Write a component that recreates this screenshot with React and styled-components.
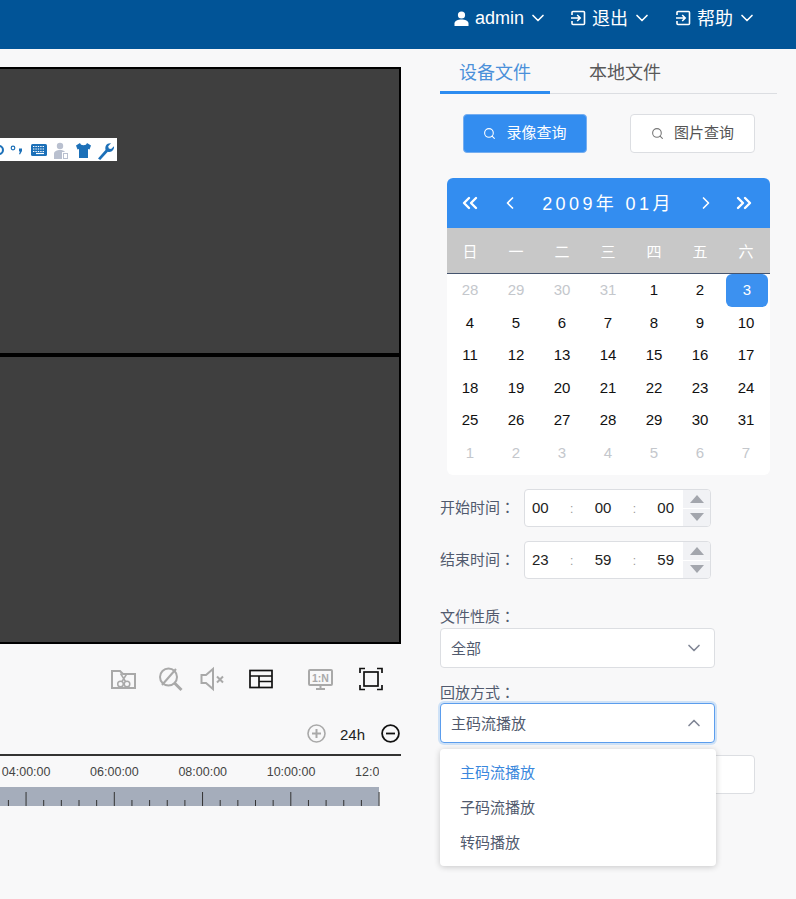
import React from 'react'
import styled, { createGlobalStyle } from 'styled-components'
import { ChevronDown, ChevronUp, ChevronLeft, ChevronRight, ChevronsLeft, ChevronsRight, Search } from 'lucide-react'

const GlobalStyle = createGlobalStyle`
  html, body {
    margin: 0;
    height: 100%;
    overflow: hidden;
    background: #f8f8f9;
    font-family: "Liberation Sans", "Noto Sans CJK SC", sans-serif;
  }
`

const Header = styled.header`
  height: 49px;
  background: #015497;
  display: flex;
  justify-content: flex-end;
  padding-right: 39px;
  color: #fff;
  font-size: 18px;
`
const HeaderItem = styled.div`
  display: flex;
  align-items: center;
  height: 36px;
  margin-left: ${(p) => p.$gap || 0}px;
  gap: 6px;
  svg:last-child {
    margin-left: -2px;
  }
`
const HeaderText = styled.span`
  margin-bottom: 2px;
`
const Main = styled.main`
  display: flex;
  gap: 39px;
`
const LeftColumn = styled.section`
  width: 401px;
  flex: none;
  padding-top: 18px;
`
const VideoGrid = styled.div`
  position: relative;
  height: 573px;
  border: 2px solid #000;
  border-left: none;
  background: #000;
  display: grid;
  grid-template-rows: 284px 285px;
  row-gap: 4px;
`
const VideoCell = styled.div`
  background: #3f3f3f;
`
const OverlayBar = styled.div`
  position: absolute;
  left: 0;
  top: 69px;
  width: 117px;
  height: 23px;
  background: #fff;
  overflow: hidden;
`
const ControlRow = styled.div`
  display: flex;
  align-items: center;
  height: 30px;
  margin-top: 20px;
  padding-left: 111px;
`
const ControlIcon = styled.svg`
  flex: none;
  width: ${(p) => p.$w || 25}px;
  height: 26px;
  margin-right: ${(p) => p.$gap || 0}px;
  fill: none;
  stroke: ${(p) => (p.$dark ? '#111' : '#a9a9a9')};
  stroke-width: ${(p) => (p.$dark ? 1.7 : 2)};
`
const IconLabel = styled.text`
  fill: #a9a9a9;
  stroke: none;
  font-size: 10.5px;
  font-weight: 700;
  font-family: "Liberation Sans", sans-serif;
`
const ZoomRow = styled.div`
  display: flex;
  align-items: center;
  justify-content: flex-end;
  height: 24px;
  margin-top: 27px;
  padding-right: 1px;
  font-size: 15px;
  color: #222;
`
const ZoomLabel = styled.span`
  margin: 3px 16px 0 14px;
`
const Timeline = styled.div`
  margin-top: 9px;
  border-top: 2px solid #333;
  width: 401px;
`
const TimeLabels = styled.div`
  width: 379px;
  height: 31px;
  overflow: hidden;
  display: flex;
  align-items: center;
  font-size: 12.5px;
  color: #444;
`
const TimeLabel = styled.span`
  flex: none;
  width: 88.3px;
  text-align: center;
  &:first-child {
    margin-left: -18px;
  }
`
const Ruler = styled.svg`
  display: block;
  width: 380px;
  height: 19px;
`

const RightColumn = styled.aside`
  width: 337px;
  flex: none;
  position: relative;
`
const Tabs = styled.div`
  display: flex;
  height: 44px;
  border-bottom: 1px solid #dcdee2;
`
const Tab = styled.div`
  width: ${(p) => p.$w}px;
  height: 45px;
  box-sizing: border-box;
  text-align: center;
  line-height: 48px;
  font-size: 18px;
  color: ${(p) => (p.$active ? '#4a90d9' : '#595959')};
  border-bottom: ${(p) => (p.$active ? '3px solid #2d8cf0' : 'none')};
`
const QueryRow = styled.div`
  display: flex;
  gap: 43px;
  margin: 20px 0 25px 23px;
`
const QueryButton = styled.button`
  display: flex;
  align-items: center;
  justify-content: center;
  gap: 10px;
  width: ${(p) => p.$w}px;
  height: 39px;
  padding: 0;
  font: inherit;
  font-size: 15px;
  border-radius: 4px;
  border: 1px solid ${(p) => (p.$primary ? '#76aef0' : '#dcdee2')};
  background: ${(p) => (p.$primary ? '#338df0' : '#fff')};
  color: ${(p) => (p.$primary ? '#fff' : '#555')};
`
const ButtonText = styled.span`
  margin-bottom: 4px;
`
const Calendar = styled.div`
  width: 323px;
  margin-left: 7px;
  background: #fff;
  border-radius: 6px;
  overflow: hidden;
`
const CalendarHead = styled.div`
  height: 50px;
  background: #338df0;
  color: #fff;
  display: flex;
  align-items: center;
  padding: 0 14px 0 11px;
`
const CalendarTitle = styled.div`
  flex: 1;
  text-align: center;
  font-size: 18px;
  letter-spacing: 3.4px;
  white-space: pre;
  padding-bottom: 2px;
`
const NavGroup = styled.div`
  display: flex;
  align-items: center;
  gap: ${(p) => p.$gap}px;
`
const WeekRow = styled.div`
  display: grid;
  grid-template-columns: repeat(7, 46px);
  height: 46px;
  align-items: center;
  background: #c8c8c8;
  border-bottom: 1px solid #45546e;
  box-sizing: border-box;
`
const WeekCell = styled.div`
  text-align: center;
  font-size: 15px;
  color: #fff;
`
const DayGrid = styled.div`
  display: grid;
  grid-template-columns: repeat(7, 46px);
  grid-auto-rows: 32.5px;
  padding-bottom: 6px;
`
const Day = styled.div`
  display: flex;
  align-items: center;
  justify-content: center;
  padding-bottom: 1px;
  font-size: 15px;
  margin-left: ${(p) => (p.$selected ? '3px' : 0)};
  margin-right: ${(p) => (p.$selected ? '1px' : 0)};
  border-radius: ${(p) => (p.$selected ? '6px' : 0)};
  background: ${(p) => (p.$selected ? '#3c91f0' : 'transparent')};
  color: ${(p) => (p.$selected ? '#fff' : p.$muted ? '#c4c7cc' : '#111')};
`
const TimeField = styled.div`
  display: flex;
  align-items: center;
  margin-top: 14px;
`
const FieldLabel = styled.label`
  width: 84px;
  font-size: 15px;
  color: #515a6e;
  white-space: nowrap;
  padding-bottom: 4px;
`
const FullColon = styled.span`
  font-family: "Noto Sans CJK TC", sans-serif;
`
const TimeBox = styled.div`
  width: 187px;
  height: 38px;
  box-sizing: border-box;
  display: flex;
  background: #fff;
  border: 1px solid #dcdee2;
  border-radius: 4px;
  overflow: hidden;
`
const TimeValues = styled.div`
  flex: 1;
  display: flex;
  align-items: center;
  justify-content: space-between;
  padding: 0 9px 2px 7px;
  font-size: 15px;
  color: #222;
`
const Colon = styled.span`
  color: #999;
  font-size: 12px;
  margin-top: 3px;
`
const Spinner = styled.div`
  width: 27px;
  flex: none;
  display: grid;
  grid-template-rows: 1fr 1fr;
  row-gap: 1px;
`
const SpinButton = styled.div`
  display: flex;
  align-items: center;
  justify-content: center;
  background: #f1f2f5;
  &::before {
    content: '';
    border-left: 7px solid transparent;
    border-right: 7px solid transparent;
    border-top: ${(p) => (p.$down ? '8px solid #a3a6ad' : 'none')};
    border-bottom: ${(p) => (p.$down ? 'none' : '8px solid #a3a6ad')};
  }
`
const SelectLabel = styled.div`
  font-size: 15px;
  line-height: 20px;
  color: #515a6e;
  margin-top: ${(p) => p.$top}px;
  margin-bottom: ${(p) => p.$bottom}px;
`
const Select = styled.div`
  width: 275px;
  height: 40px;
  box-sizing: border-box;
  display: flex;
  align-items: center;
  justify-content: space-between;
  padding: 0 10px;
  background: #fff;
  border-radius: 4px;
  font-size: 15px;
  color: #515a6e;
  border: 1px solid ${(p) => (p.$open ? '#5b9ded' : '#dcdee2')};
  box-shadow: ${(p) => (p.$open ? '0 0 0 2px rgba(45, 140, 240, 0.2)' : 'none')};
`
const SelectText = styled.span`
  margin-bottom: 2px;
`
const BackInput = styled.div`
  width: 315px;
  height: 39px;
  box-sizing: border-box;
  margin-top: 12px;
  background: #fff;
  border: 1px solid #dcdee2;
  border-radius: 4px;
`
const Dropdown = styled.ul`
  position: absolute;
  left: 0;
  top: 700px;
  width: 276px;
  height: 117px;
  box-sizing: border-box;
  margin: 0;
  padding: 6px 0;
  list-style: none;
  background: #fff;
  border-radius: 4px;
  box-shadow: 0 1px 6px rgba(0, 0, 0, 0.2);
`
const Option = styled.li`
  height: 35px;
  line-height: 35px;
  padding-left: 20px;
  font-size: 15px;
  color: ${(p) => (p.$active ? '#3a87dd' : '#515a6e')};
`

function EnterIcon() {
  return (
    <svg width="16" height="16" viewBox="0 0 16 16" fill="none" stroke="#fff" strokeWidth="1.6">
      <path d="M2 5V2.500A1 1 0 0 1 3 1.500h10.500a1 1 0 0 1 1 1v11a1 1 0 0 1-1 1H3a1 1 0 0 1-1-1V11" />
      <path d="M1 8h9M7.200 5l3 3-3 3" />
    </svg>
  )
}

function UserIcon() {
  return (
    <svg width="15" height="15" viewBox="0 0 15 15" fill="#fff">
      <circle cx="7.500" cy="4" r="3.600" />
      <path d="M0.500 15v-2.500C0.500 10 4 8.600 7.500 8.600s7 1.400 7 3.900V15z" />
    </svg>
  )
}

function OverlayIcons() {
  return (
    <svg width="117" height="23" viewBox="0 0 117 23" fill="#1c70b8">
      <circle cx="-1" cy="12" r="4" fill="none" stroke="#1c70b8" strokeWidth="2" />
      <circle cx="13" cy="10" r="1.800" fill="none" stroke="#1c70b8" strokeWidth="1.200" />
      <path d="M19 10.500h3v2.500l-2 3.500-1-.6 1-2.400h-1z" />
      <rect x="31" y="6" width="16" height="12" rx="1.500" />
      <path d="M33 8.500h12M33 11h12M33 13.500h12" stroke="#fff" strokeWidth="1.100" strokeDasharray="1.400 1" />
      <path d="M36 15.500h8" stroke="#fff" strokeWidth="1.200" />
      <circle cx="60" cy="8" r="3.200" fill="#b9c0cf" />
      <path d="M54 21v-5c0-3 3-4 6-4 2 0 4 .5 5 2h-3v7z" fill="#b9c0cf" />
      <rect x="63.500" y="15.500" width="4" height="5" fill="#fff" stroke="#b9c0cf" strokeWidth="1" />
      <path d="M80 5l-4 2.500 1.500 4 1.500-.6V20h9v-9.100l1.500.6 1.500-4-4-2.500c-.6 1.600-1.300 2.200-3.500 2.200S80.600 6.600 80 5z" />
      <path d="M98 20.500l7.500-8.500c-.6-2.800.2-5 2.200-6.200 1-.6 2.200-.8 3.300-.6l-2.800 3 .6 2.300 2.300.6 2.900-2.800c.2 1.400-.1 2.600-.9 3.700-1.300 1.700-3.200 2.300-5.300 1.700L100.200 22z" />
    </svg>
  )
}

function ControlIcons() {
  return (
    <ControlRow>
      <ControlIcon viewBox="0 0 25 26" $gap={22}>
        <path d="M1 5h8l3 3h12v14H1z" />
        <circle cx="9.500" cy="18" r="2.800" strokeWidth="1.500" />
        <circle cx="16" cy="18" r="2.800" strokeWidth="1.500" />
        <path d="M11 15.500l5-8M14.500 15.500l-5-8" strokeWidth="1.500" />
      </ControlIcon>
      <ControlIcon viewBox="0 0 25 26" $gap={17}>
        <circle cx="10.500" cy="11" r="8.500" />
        <path d="M4 19L18 3" />
        <path d="M16.500 17l7 7" strokeWidth="3" />
      </ControlIcon>
      <ControlIcon viewBox="0 0 24 26" $w={24} $gap={25}>
        <path d="M1.500 9h4.500l7-6v20l-7-6H1.500z" />
        <path d="M17 10.500l6 6M23 10.500l-6 6" />
      </ControlIcon>
      <ControlIcon viewBox="0 0 24 26" $w={24} $gap={35} $dark>
        <rect x="1" y="4.500" width="22" height="17" />
        <path d="M1 10h22M10 10v11.500M10 15.500h13" />
      </ControlIcon>
      <ControlIcon viewBox="0 0 25 26" $gap={26}>
        <rect x="1" y="4" width="23" height="15" rx="1" />
        <path d="M8 23h9M12.500 19v4" />
        <IconLabel x="12.500" y="15.500" textAnchor="middle">1:N</IconLabel>
      </ControlIcon>
      <ControlIcon viewBox="0 0 24 26" $w={24} $dark>
        <rect x="5" y="6" width="14" height="14" />
        <path d="M1 7V2.500h5M18 2.500h5V7M1 19v4.500h5M18 23.500h5V19" />
      </ControlIcon>
    </ControlRow>
  )
}

function Ruler24() {
  const ticks = []
  for (let i = 0; i <= 21; i++) {
    const x = 8.4 + i * 17.65
    const major = i % 5 === 1
    ticks.push(<line key={i} x1={x} x2={x} y1={major ? 5 : 13} y2="19" stroke="#333" strokeWidth="1" />)
  }
  return (
    <Ruler viewBox="0 0 380 19">
      <rect width="379" height="19" fill="#a5adbb" />
      {ticks}
    </Ruler>
  )
}

const weekDays = ['日', '一', '二', '三', '四', '五', '六']
const days = [
  [28, 1], [29, 1], [30, 1], [31, 1], [1], [2], [3, 0, 1],
  ...Array.from({ length: 28 }, (_, i) => [i + 4]),
  [1, 1], [2, 1], [3, 1], [4, 1], [5, 1], [6, 1], [7, 1],
]

export default function App() {
  return (
    <>
      <GlobalStyle />
      <Header>
        <HeaderItem>
          <UserIcon />
          admin
          <ChevronDown size={20} strokeWidth={2} />
        </HeaderItem>
        <HeaderItem $gap={22}>
          <EnterIcon />
          <HeaderText>退出</HeaderText>
          <ChevronDown size={20} strokeWidth={2} />
        </HeaderItem>
        <HeaderItem $gap={23}>
          <EnterIcon />
          <HeaderText>帮助</HeaderText>
          <ChevronDown size={20} strokeWidth={2} />
        </HeaderItem>
      </Header>
      <Main>
        <LeftColumn>
          <VideoGrid>
            <VideoCell />
            <VideoCell />
            <OverlayBar>
              <OverlayIcons />
            </OverlayBar>
          </VideoGrid>
          <ControlIcons />
          <ZoomRow>
            <svg width="19" height="19" viewBox="0 0 19 19" fill="none" stroke="#a9a9a9" strokeWidth="1.600">
              <circle cx="9.500" cy="9.500" r="8.500" />
              <path d="M9.500 5v9M5 9.500h9" strokeWidth="2" />
            </svg>
            <ZoomLabel>24h</ZoomLabel>
            <svg width="19" height="19" viewBox="0 0 19 19" fill="none" stroke="#111" strokeWidth="1.800">
              <circle cx="9.500" cy="9.500" r="8.400" />
              <path d="M5 9.500h9" />
            </svg>
          </ZoomRow>
          <Timeline>
            <TimeLabels>
              {['04:00:00', '06:00:00', '08:00:00', '10:00:00', '12:00:00'].map((t) => (
                <TimeLabel key={t}>{t}</TimeLabel>
              ))}
            </TimeLabels>
            <Ruler24 />
          </Timeline>
        </LeftColumn>
        <RightColumn>
          <Tabs>
            <Tab $w={110} $active>设备文件</Tab>
            <Tab $w={150}>本地文件</Tab>
          </Tabs>
          <QueryRow>
            <QueryButton $w={124} $primary>
              <Search size={13} strokeWidth={2} />
              <ButtonText>录像查询</ButtonText>
            </QueryButton>
            <QueryButton $w={125}>
              <Search size={13} strokeWidth={2} color="#777" />
              <ButtonText>图片查询</ButtonText>
            </QueryButton>
          </QueryRow>
          <Calendar>
            <CalendarHead>
              <NavGroup $gap={18}>
                <ChevronsLeft size={24} strokeWidth={2.4} />
                <ChevronLeft size={20} strokeWidth={2} />
              </NavGroup>
              <CalendarTitle>2009年 01月</CalendarTitle>
              <NavGroup $gap={16}>
                <ChevronRight size={20} strokeWidth={2} />
                <ChevronsRight size={24} strokeWidth={2.4} />
              </NavGroup>
            </CalendarHead>
            <WeekRow>
              {weekDays.map((d) => (
                <WeekCell key={d}>{d}</WeekCell>
              ))}
            </WeekRow>
            <DayGrid>
              {days.map(([n, muted, selected], i) => (
                <Day key={i} $muted={muted} $selected={selected}>{n}</Day>
              ))}
            </DayGrid>
          </Calendar>
          <TimeField>
            <FieldLabel>开始时间<FullColon>：</FullColon></FieldLabel>
            <TimeBox>
              <TimeValues>
                <span>00</span><Colon>:</Colon><span>00</span><Colon>:</Colon><span>00</span>
              </TimeValues>
              <Spinner>
                <SpinButton />
                <SpinButton $down />
              </Spinner>
            </TimeBox>
          </TimeField>
          <TimeField>
            <FieldLabel>结束时间<FullColon>：</FullColon></FieldLabel>
            <TimeBox>
              <TimeValues>
                <span>23</span><Colon>:</Colon><span>59</span><Colon>:</Colon><span>59</span>
              </TimeValues>
              <Spinner>
                <SpinButton />
                <SpinButton $down />
              </Spinner>
            </TimeBox>
          </TimeField>
          <SelectLabel $top={27} $bottom={1}>文件性质<FullColon>：</FullColon></SelectLabel>
          <Select>
            <SelectText>全部</SelectText>
            <ChevronDown size={20} color="#808695" strokeWidth={2} />
          </Select>
          <SelectLabel $top={14} $bottom={0}>回放方式<FullColon>：</FullColon></SelectLabel>
          <Select $open>
            <SelectText>主码流播放</SelectText>
            <ChevronUp size={20} color="#808695" strokeWidth={2} />
          </Select>
          <BackInput />
          <Dropdown>
            <Option $active>主码流播放</Option>
            <Option>子码流播放</Option>
            <Option>转码播放</Option>
          </Dropdown>
        </RightColumn>
      </Main>
    </>
  )
}
